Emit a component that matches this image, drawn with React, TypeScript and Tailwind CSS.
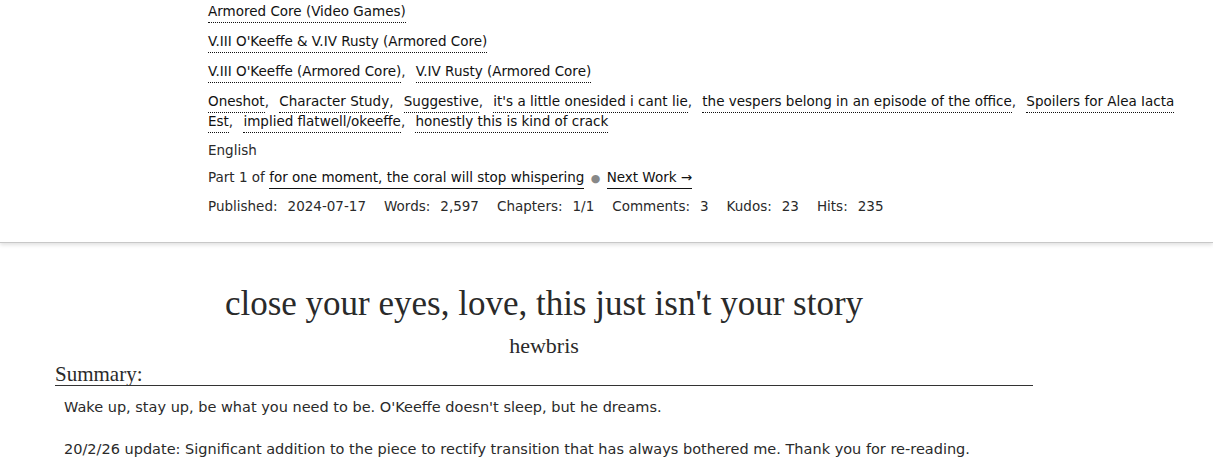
import React from "react";

const sans = "font-['DejaVu_Sans',sans-serif]";
const serif = "font-['Liberation_Serif',serif]";

function Tag({ children, last }: { children: React.ReactNode; last?: boolean }) {
  return (
    <>
      <a className="border-b border-dotted border-[#111] pb-[3px] text-[#111]">{children}</a>
      {!last && <span className="mr-[6px]">,</span>}{" "}
    </>
  );
}

function Row({ children, className = "" }: { children: React.ReactNode; className?: string }) {
  return <div className={`leading-[20px] ${className}`}>{children}</div>;
}

const freeforms = [
  "Oneshot",
  "Character Study",
  "Suggestive",
  "it's a little onesided i cant lie",
  "the vespers belong in an episode of the office",
  "Spoilers for Alea Iacta Est",
  "implied flatwell/okeeffe",
  "honestly this is kind of crack",
];

const stats = [
  ["Published:", "2024-07-17"],
  ["Words:", "2,597"],
  ["Chapters:", "1/1"],
  ["Comments:", "3"],
  ["Kudos:", "23"],
  ["Hits:", "235"],
];

export default function App() {
  return (
    <div className={`min-h-[475px] bg-white text-[#2a2a2a] ${sans}`}>
      <div className="border-b border-[#c8c8c8] pl-[208px] pr-[18px] pt-[1px] pb-[26px] text-[13.5px] shadow-[0_2px_4px_rgba(0,0,0,0.12)]">
        <Row className="mb-[10px]">
          <Tag last>Armored Core (Video Games)</Tag>
        </Row>
        <Row className="mb-[10px]">
          <Tag last>V.III O'Keeffe &amp; V.IV Rusty (Armored Core)</Tag>
        </Row>
        <Row className="mb-[10px]">
          <Tag>V.III O'Keeffe (Armored Core)</Tag>
          <Tag last>V.IV Rusty (Armored Core)</Tag>
        </Row>
        <Row className="mb-[9px]">
          {freeforms.map((t, i) => (
            <Tag key={t} last={i === freeforms.length - 1}>
              {t}
            </Tag>
          ))}
        </Row>
        <Row className="mb-[7px]">English</Row>
        <Row className="mb-[7px]">
          Part 1 of{" "}
          <a className="border-b border-[#111] pb-[3px] text-[#111]">
            for one moment, the coral will stop whispering
          </a>{" "}
          <span className="mx-[2px] text-[11px] text-[#888]">●</span>{" "}
          <a className="border-b border-[#111] pb-[3px] text-[#111]">Next Work →</a>
        </Row>
        <Row className="flex gap-[18px]">
          {stats.map(([k, v]) => (
            <span key={k} className="flex gap-[10px]">
              <span>{k}</span>
              <span>{v}</span>
            </span>
          ))}
        </Row>
      </div>

      <div className="ml-[55px] w-[978px] pt-[41px]">
        <h2 className={`${serif} text-center text-[35px] leading-[40px] text-[#2a2a2a]`}>
          close your eyes, love, this just isn't your story
        </h2>
        <h3 className={`${serif} mt-[9px] text-center text-[22px] leading-[26px] text-[#2a2a2a]`}>
          hewbris
        </h3>
        <h3 className={`${serif} mt-[4px] border-b border-[#333] text-[21px] leading-[22px] text-[#2a2a2a]`}>
          Summary:
        </h3>
        <div className="pl-[9px] pt-[11px] text-[14.5px]">
          <p className="leading-[20px]">
            Wake up, stay up, be what you need to be. O'Keeffe doesn't sleep, but he dreams.
          </p>
          <p className="mt-[22px] leading-[20px]">
            20/2/26 update: Significant addition to the piece to rectify transition that has always bothered me.
            Thank you for re-reading.
          </p>
        </div>
      </div>
    </div>
  );
}
